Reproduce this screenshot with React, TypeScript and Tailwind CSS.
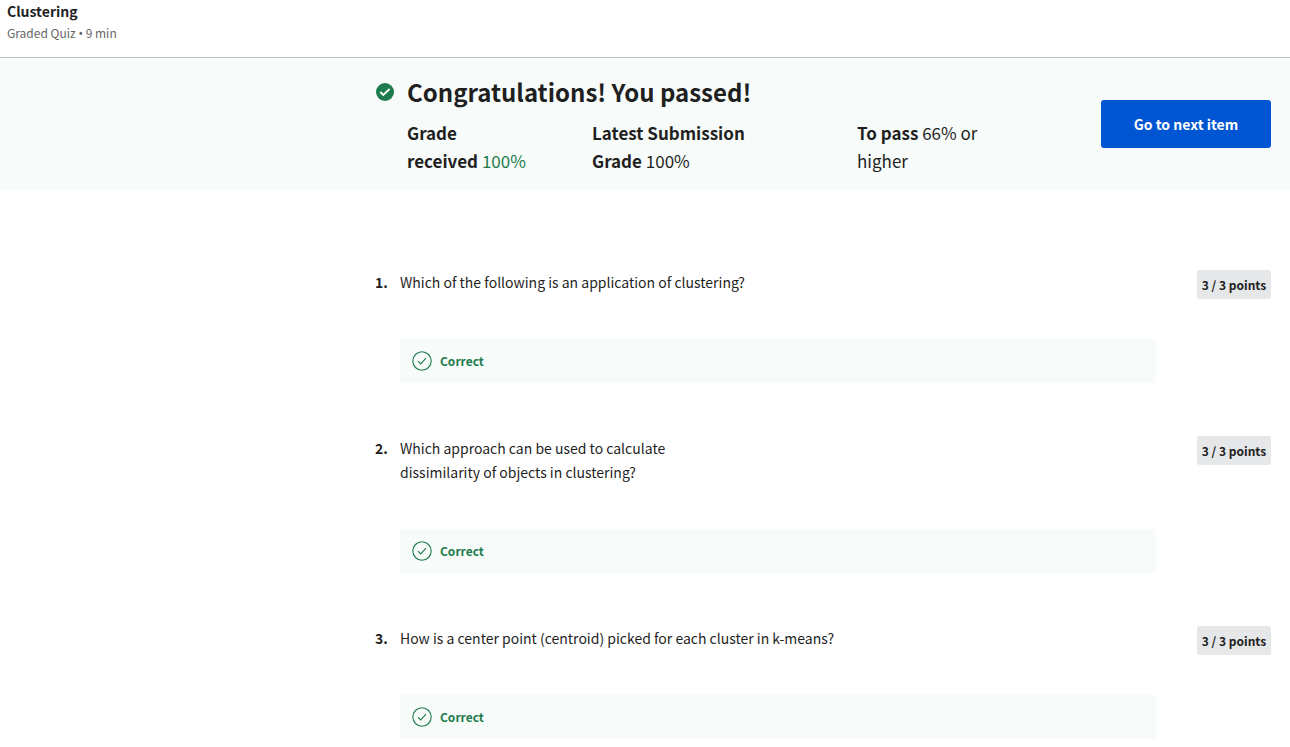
import React from "react";

type Question = { id: number; text: string; earned: number; total: number };

const questions: Question[] = [
  { id: 1, text: "Which of the following is an application of clustering?", earned: 3, total: 3 },
  { id: 2, text: "Which approach can be used to calculate\ndissimilarity of objects in clustering?", earned: 3, total: 3 },
  { id: 3, text: "How is a center point (centroid) picked for each cluster in k-means?", earned: 3, total: 3 },
];

function PassedIcon() {
  return (
    <svg viewBox="0 0 18 18" className="size-[18px] shrink-0" aria-hidden="true">
      <circle cx="9" cy="9" r="9" fill="#1d7c4d" />
      <path d="M4.3 9 7.3 12 13.6 6" fill="none" stroke="#fff" strokeWidth="1.9" />
    </svg>
  );
}

function CorrectIcon() {
  return (
    <svg viewBox="0 0 20 20" className="size-5 shrink-0" fill="none" stroke="#1d7c4d" aria-hidden="true">
      <circle cx="10" cy="10" r="9.2" strokeWidth="1.1" />
      <path d="M6 10.2 8.7 12.9 14 7.2" strokeWidth="1.1" />
    </svg>
  );
}

function QuestionItem({ question }: { question: Question }) {
  return (
    <li className="flex items-start">
      <span className="w-[25px] shrink-0 text-sm leading-6 font-bold">{question.id}.</span>
      <div className="flex-1">
        <p className="whitespace-pre-line text-sm leading-6">{question.text}</p>
        <div className="mt-[45px] mr-[41px] flex h-11 items-center gap-2 bg-[#f7fbf9] px-3">
          <CorrectIcon />
          <span className="text-xs leading-5 font-bold text-[#1d7c4d]">Correct</span>
        </div>
      </div>
      <span className="flex h-[29px] w-[74px] shrink-0 items-center justify-center rounded-[3px] bg-[#e5e7e8] text-xs font-bold">
        {question.earned} / {question.total} points
      </span>
    </li>
  );
}

export default function App() {
  return (
    <div className="min-h-screen bg-white font-['Noto_Sans_CJK_SC',sans-serif] text-[#1f1f1f]">
      <header className="border-b border-[#c1c1c1] px-[7px] pt-px pb-[11px]">
        <h1 className="text-sm leading-5 font-bold">Clustering</h1>
        <p className="text-xs leading-6 text-[#666]">
          Graded Quiz <span className="font-['Noto_Sans',sans-serif]">•</span> 9 min
        </p>
      </header>
      <section className="flex items-start bg-[#f7fbf9] pt-4 pr-[19px] pb-[15px] pl-[376px]">
        <div className="flex flex-1 items-start gap-[13px]">
          <div className="flex h-9 items-center">
            <PassedIcon />
          </div>
          <div className="flex-1">
            <h2 className="text-2xl leading-9 font-bold">Congratulations! You passed!</h2>
            <dl className="mt-[9px] flex text-[17px] leading-7">
              <div className="w-[185px]">
                <dt className="inline font-bold">Grade<br />received</dt> <dd className="inline text-[#1d7c4d]">100%</dd>
              </div>
              <div className="w-[265px]">
                <dt className="inline font-bold">Latest Submission<br />Grade</dt> <dd className="inline">100%</dd>
              </div>
              <div>
                <dt className="inline font-bold">To pass</dt> <dd className="inline">66% or<br />higher</dd>
              </div>
            </dl>
          </div>
        </div>
        <button type="button" className="mt-[26px] h-12 w-[170px] rounded-[3px] bg-[#0056d2] text-sm font-bold text-white">
          Go to next item
        </button>
      </section>
      <main className="pt-20 pr-[19px] pb-2 pl-[375px]">
        <ol className="flex flex-col gap-[53px]">
          {questions.map((q) => (
            <QuestionItem key={q.id} question={q} />
          ))}
        </ol>
      </main>
    </div>
  );
}
